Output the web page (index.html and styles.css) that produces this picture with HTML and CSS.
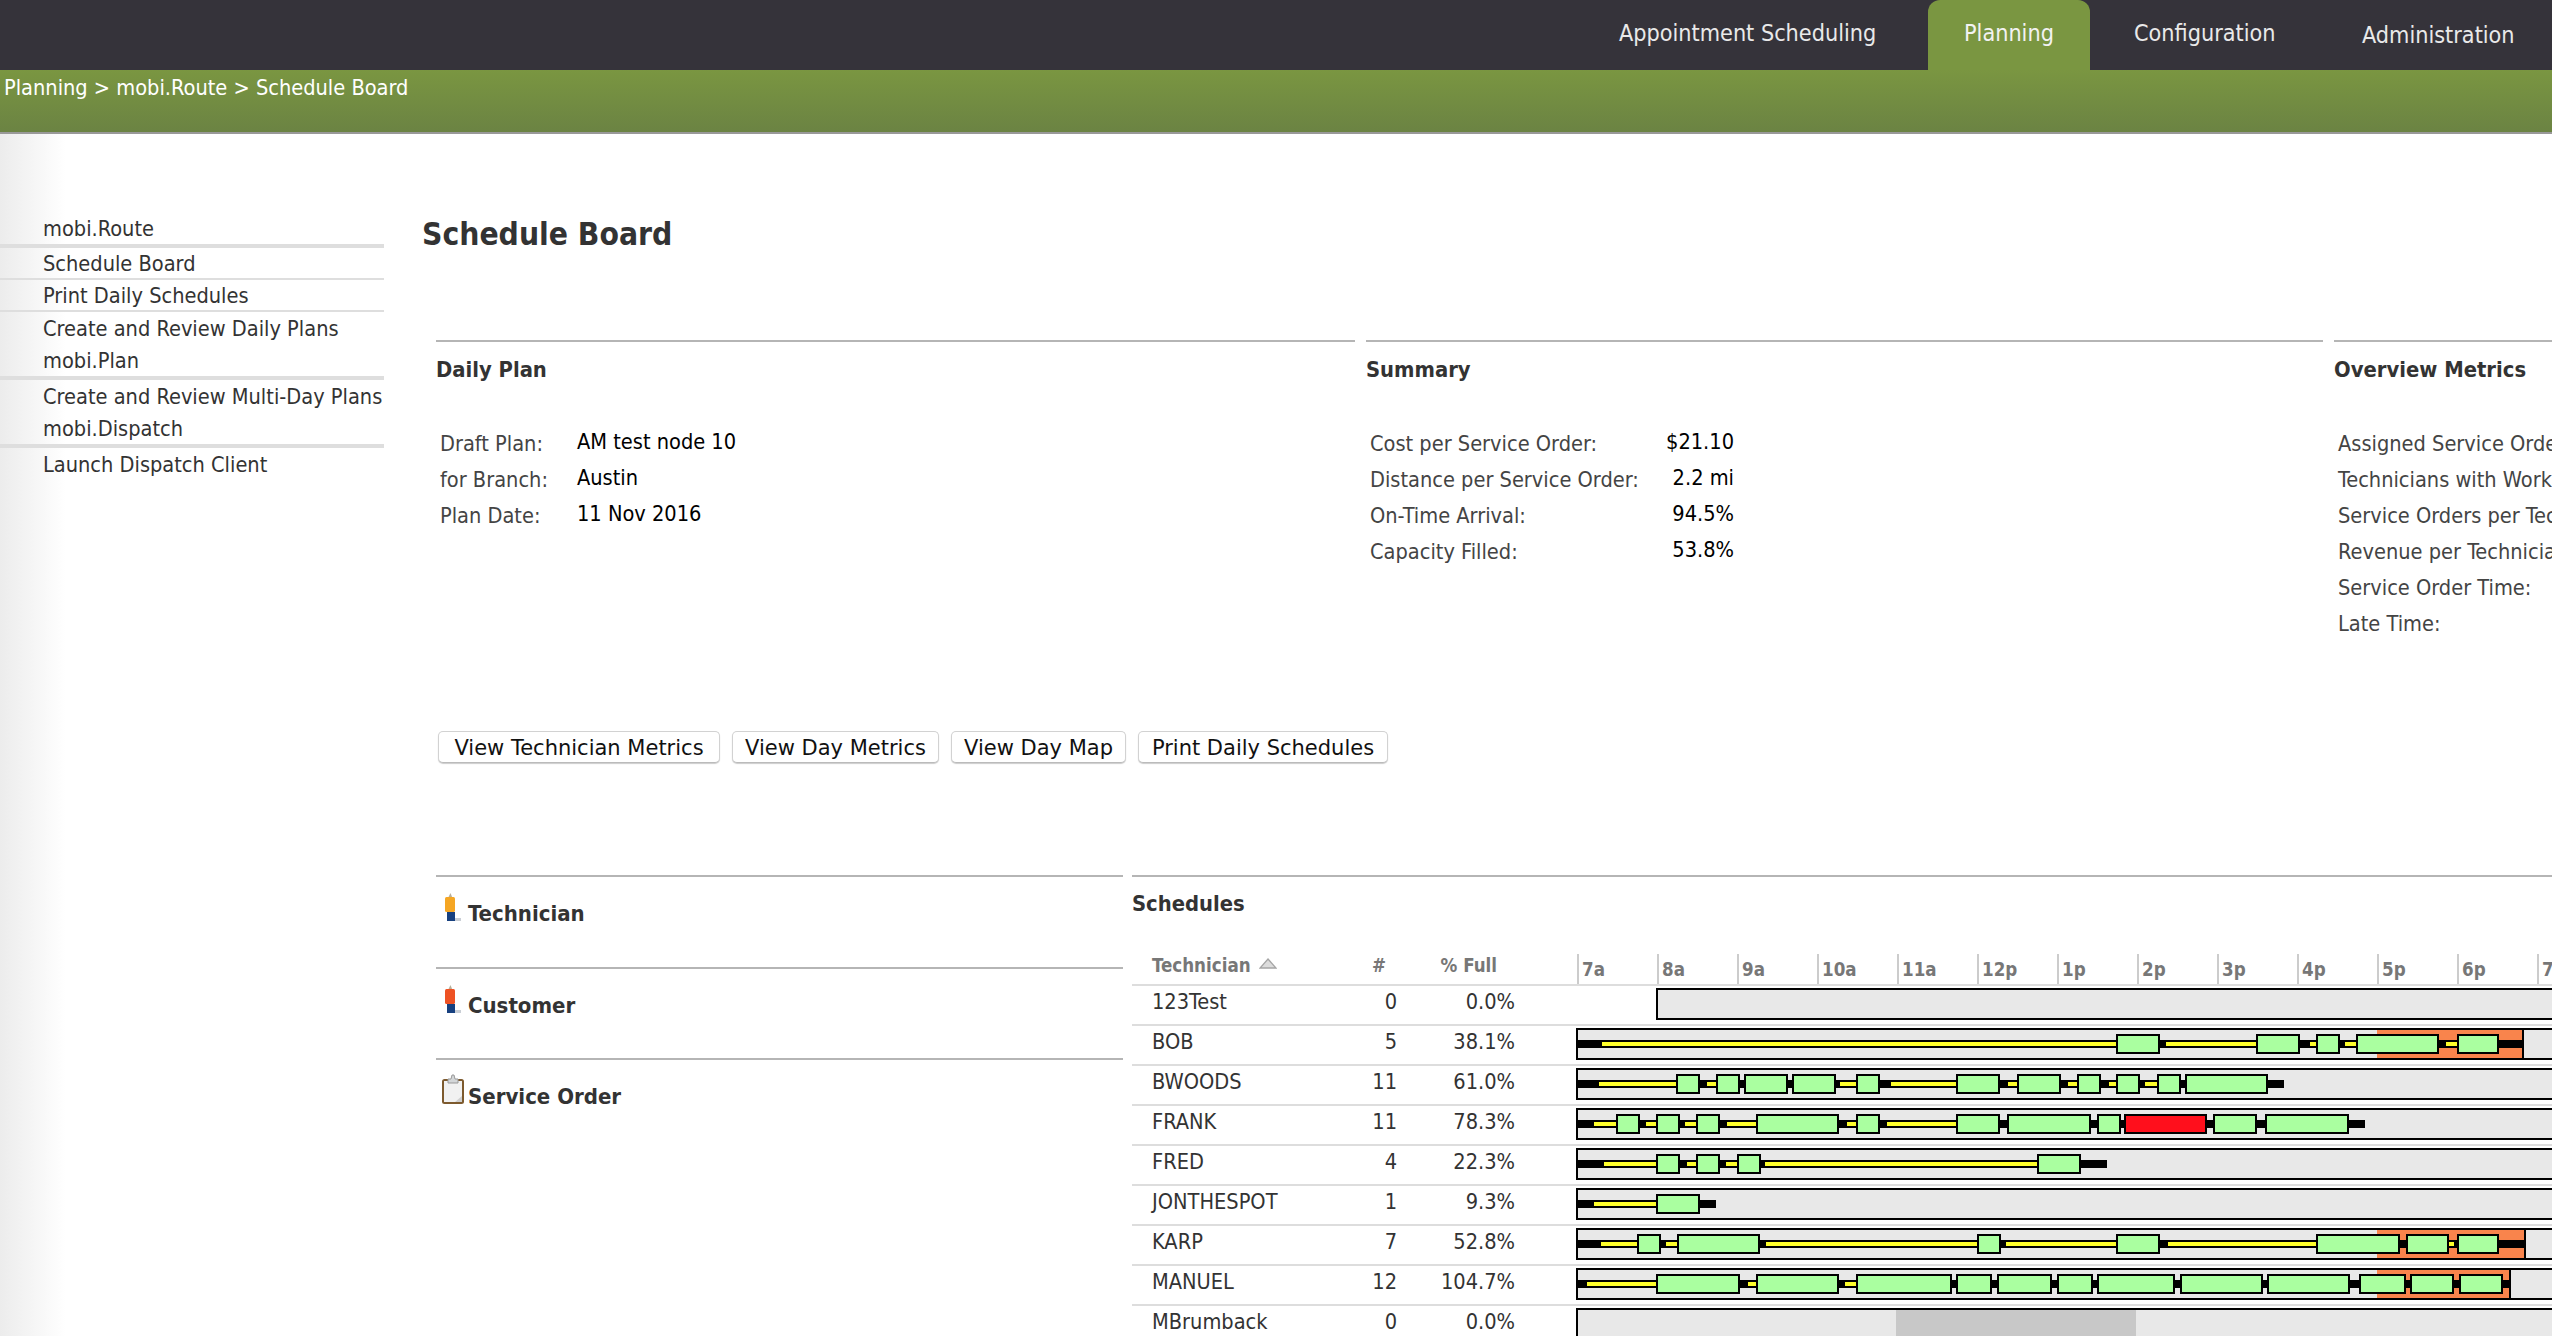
FILE: index.html
```html
<!DOCTYPE html>
<html lang="en">
<head>
<meta charset="utf-8">
<title>Schedule Board</title>
<link rel="stylesheet" href="styles.css">
</head>
<body>
<header class="topbar">
  <nav class="tabs">
    <a class="tab tab-appt">Appointment Scheduling</a>
    <a class="tab tab-active">Planning</a>
    <a class="tab tab-config">Configuration</a>
    <a class="tab tab-admin">Administration</a>
  </nav>
</header>
<div class="crumbs">Planning &gt; mobi.Route &gt; Schedule Board</div>
<div class="layout">
  <aside class="sidebar">
    <div class="side-item rule-thick">mobi.Route</div>
    <div class="side-item rule-thin">Schedule Board</div>
    <div class="side-item rule-thin">Print Daily Schedules</div>
    <div class="side-item">Create and Review Daily Plans</div>
    <div class="side-item rule-thick">mobi.Plan</div>
    <div class="side-item">Create and Review Multi-Day Plans</div>
    <div class="side-item rule-thick">mobi.Dispatch</div>
    <div class="side-item">Launch Dispatch Client</div>
  </aside>
  <main class="main">
    <h1 class="title">Schedule Board</h1>
    <section class="panels">
      <div class="panel">
        <h2 class="heading">Daily Plan</h2>
        <div class="kv kv-plan">
          <span class="k">Draft Plan:</span><span class="v">AM test node 10</span>
          <span class="k">for Branch:</span><span class="v">Austin</span>
          <span class="k">Plan Date:</span><span class="v">11 Nov 2016</span>
        </div>
      </div>
      <div class="panel">
        <h2 class="heading">Summary</h2>
        <div class="kv kv-summary">
          <span class="k">Cost per Service Order:</span><span class="v">$21.10</span>
          <span class="k">Distance per Service Order:</span><span class="v">2.2 mi</span>
          <span class="k">On-Time Arrival:</span><span class="v">94.5%</span>
          <span class="k">Capacity Filled:</span><span class="v">53.8%</span>
        </div>
      </div>
      <div class="panel">
        <h2 class="heading">Overview Metrics</h2>
        <div class="kv kv-overview">
          <span class="k">Assigned Service Orders:</span>
          <span class="k">Technicians with Work:</span>
          <span class="k">Service Orders per Technician:</span>
          <span class="k">Revenue per Technician:</span>
          <span class="k">Service Order Time:</span>
          <span class="k">Late Time:</span>
        </div>
      </div>
    </section>
    <div class="actions">
      <button class="btn btn-tech">View Technician Metrics</button>
      <button class="btn btn-metrics">View Day Metrics</button>
      <button class="btn btn-map">View Day Map</button>
      <button class="btn btn-print">Print Daily Schedules</button>
    </div>
    <section class="lower">
      <div class="legend">
        <div class="legend-row">
          <span class="legend-icon">
            <svg width="18" height="30" viewBox="0 0 18 30"><path d="M3 5 L5.5 0 L7.5 5 Z" fill="#b9b09a"/><rect x="0" y="4" width="10" height="15" rx="1.5" fill="#f5a623"/><rect x="2" y="19" width="8" height="9" fill="#17407f"/><rect x="10" y="25" width="6" height="3" fill="#c9ced5"/></svg>
          </span>
          <span class="legend-label">Technician</span>
        </div>
        <div class="legend-row">
          <span class="legend-icon">
            <svg width="18" height="30" viewBox="0 0 18 30"><path d="M3 5 L5.5 0 L7.5 5 Z" fill="#b9b09a"/><rect x="0" y="4" width="10" height="15" rx="1.5" fill="#ee5224"/><rect x="2" y="19" width="8" height="9" fill="#17407f"/><rect x="10" y="25" width="6" height="3" fill="#c9ced5"/></svg>
          </span>
          <span class="legend-label">Customer</span>
        </div>
        <div class="legend-row">
          <span class="legend-icon icon-clip">
            <svg width="24" height="31" viewBox="0 0 24 31"><rect x="1" y="5" width="22" height="25" rx="2.5" fill="#7d5a2e"/><rect x="3" y="7" width="18" height="21" fill="#f1f1f1"/><path d="M14 28 L21 28 L21 22 Z" fill="#cfcfcf"/><path d="M7 9 L7 5 L10 5 L11 1 L13 1 L14 5 L17 5 L17 9 Z" fill="#d3d6d8" stroke="#999" stroke-width="1"/></svg>
          </span>
          <span class="legend-label">Service Order</span>
        </div>
      </div>
      <div class="schedules">
        <h2 class="heading">Schedules</h2>
        <div class="board-head">
          <span class="hc">Technician <svg class="sort" width="18" height="11" viewBox="0 0 18 11"><path d="M9 1 L17 10 L1 10 Z" fill="#dcdcdc" stroke="#a5a5a5" stroke-width="1.3"/></svg></span>
          <span class="hc hc-count">#</span>
          <span class="hc hc-full">% Full</span>
          <div class="hours">
            <span class="hour">7a</span><span class="hour">8a</span><span class="hour">9a</span><span class="hour">10a</span><span class="hour">11a</span><span class="hour">12p</span><span class="hour">1p</span><span class="hour">2p</span><span class="hour">3p</span><span class="hour">4p</span><span class="hour">5p</span><span class="hour">6p</span><span class="hour">7p</span>
          </div>
        </div>

        <div class="board-row">
          <span class="c-name">123Test</span><span class="c-num">0</span><span class="c-num">0.0%</span>
          <div class="track track-late"></div>
        </div>

        <div class="board-row">
          <span class="c-name">BOB</span><span class="c-num">5</span><span class="c-num">38.1%</span>
          <div class="track">
            <i class="over" style="left:798px;width:147px"></i>
            <i class="line" style="width:945px"></i>
            <i class="drive" style="left:23px;width:514px"></i>
            <i class="job" style="left:537px;width:44px"></i>
            <i class="drive" style="left:587px;width:90px"></i>
            <i class="job" style="left:677px;width:44px"></i>
            <i class="drive" style="left:731px;width:6px"></i>
            <i class="job" style="left:737px;width:24px"></i>
            <i class="drive" style="left:766px;width:11px"></i>
            <i class="job" style="left:777px;width:83px"></i>
            <i class="drive" style="left:867px;width:11px"></i>
            <i class="job" style="left:878px;width:42px"></i>
          </div>
        </div>

        <div class="board-row">
          <span class="c-name">BWOODS</span><span class="c-num">11</span><span class="c-num">61.0%</span>
          <div class="track">
            <i class="line" style="width:706px"></i>
            <i class="drive" style="left:20px;width:78px"></i>
            <i class="job" style="left:97px;width:24px"></i>
            <i class="drive" style="left:128px;width:9px"></i>
            <i class="job" style="left:137px;width:24px"></i>
            <i class="job" style="left:165px;width:44px"></i>
            <i class="job" style="left:213px;width:44px"></i>
            <i class="drive" style="left:261px;width:17px"></i>
            <i class="job" style="left:277px;width:24px"></i>
            <i class="drive" style="left:312px;width:65px"></i>
            <i class="job" style="left:377px;width:44px"></i>
            <i class="drive" style="left:429px;width:9px"></i>
            <i class="job" style="left:438px;width:44px"></i>
            <i class="drive" style="left:489px;width:9px"></i>
            <i class="job" style="left:498px;width:24px"></i>
            <i class="drive" style="left:530px;width:7px"></i>
            <i class="job" style="left:537px;width:24px"></i>
            <i class="drive" style="left:566px;width:12px"></i>
            <i class="job" style="left:578px;width:24px"></i>
            <i class="job" style="left:606px;width:83px"></i>
          </div>
        </div>

        <div class="board-row">
          <span class="c-name">FRANK</span><span class="c-num">11</span><span class="c-num">78.3%</span>
          <div class="track">
            <i class="line" style="width:787px"></i>
            <i class="drive" style="left:15px;width:22px"></i>
            <i class="job" style="left:37px;width:24px"></i>
            <i class="drive" style="left:67px;width:10px"></i>
            <i class="job" style="left:77px;width:24px"></i>
            <i class="drive" style="left:106px;width:11px"></i>
            <i class="job" style="left:117px;width:24px"></i>
            <i class="drive" style="left:148px;width:29px"></i>
            <i class="job" style="left:177px;width:83px"></i>
            <i class="drive" style="left:268px;width:9px"></i>
            <i class="job" style="left:277px;width:24px"></i>
            <i class="drive" style="left:308px;width:69px"></i>
            <i class="job" style="left:377px;width:44px"></i>
            <i class="job" style="left:428px;width:84px"></i>
            <i class="job" style="left:518px;width:24px"></i>
            <i class="job job-late" style="left:545px;width:83px"></i>
            <i class="job" style="left:634px;width:44px"></i>
            <i class="job" style="left:686px;width:84px"></i>
          </div>
        </div>

        <div class="board-row">
          <span class="c-name">FRED</span><span class="c-num">4</span><span class="c-num">22.3%</span>
          <div class="track">
            <i class="line" style="width:529px"></i>
            <i class="drive" style="left:25px;width:52px"></i>
            <i class="job" style="left:77px;width:24px"></i>
            <i class="drive" style="left:108px;width:9px"></i>
            <i class="job" style="left:117px;width:24px"></i>
            <i class="drive" style="left:147px;width:11px"></i>
            <i class="job" style="left:158px;width:24px"></i>
            <i class="drive" style="left:186px;width:272px"></i>
            <i class="job" style="left:458px;width:44px"></i>
          </div>
        </div>

        <div class="board-row">
          <span class="c-name">JONTHESPOT</span><span class="c-num">1</span><span class="c-num">9.3%</span>
          <div class="track">
            <i class="line" style="width:138px"></i>
            <i class="drive" style="left:15px;width:62px"></i>
            <i class="job" style="left:77px;width:44px"></i>
          </div>
        </div>

        <div class="board-row">
          <span class="c-name">KARP</span><span class="c-num">7</span><span class="c-num">52.8%</span>
          <div class="track">
            <i class="over" style="left:798px;width:149px"></i>
            <i class="line" style="width:947px"></i>
            <i class="drive" style="left:22px;width:36px"></i>
            <i class="job" style="left:58px;width:24px"></i>
            <i class="drive" style="left:87px;width:11px"></i>
            <i class="job" style="left:98px;width:83px"></i>
            <i class="drive" style="left:187px;width:211px"></i>
            <i class="job" style="left:398px;width:24px"></i>
            <i class="drive" style="left:427px;width:110px"></i>
            <i class="job" style="left:537px;width:44px"></i>
            <i class="drive" style="left:589px;width:148px"></i>
            <i class="job" style="left:737px;width:84px"></i>
            <i class="job" style="left:827px;width:43px"></i>
            <i class="drive" style="left:870px;width:5px"></i>
            <i class="job" style="left:878px;width:42px"></i>
          </div>
        </div>

        <div class="board-row">
          <span class="c-name">MANUEL</span><span class="c-num">12</span><span class="c-num">104.7%</span>
          <div class="track">
            <i class="over" style="left:798px;width:134px"></i>
            <i class="line" style="width:932px"></i>
            <i class="drive" style="left:8px;width:69px"></i>
            <i class="job" style="left:77px;width:84px"></i>
            <i class="drive" style="left:169px;width:8px"></i>
            <i class="job" style="left:177px;width:83px"></i>
            <i class="drive" style="left:266px;width:11px"></i>
            <i class="job" style="left:277px;width:96px"></i>
            <i class="job" style="left:377px;width:36px"></i>
            <i class="job" style="left:418px;width:55px"></i>
            <i class="job" style="left:478px;width:36px"></i>
            <i class="job" style="left:518px;width:78px"></i>
            <i class="job" style="left:601px;width:83px"></i>
            <i class="job" style="left:688px;width:83px"></i>
            <i class="job" style="left:780px;width:47px"></i>
            <i class="job" style="left:831px;width:44px"></i>
            <i class="job" style="left:880px;width:44px"></i>
          </div>
        </div>

        <div class="board-row">
          <span class="c-name">MBrumback</span><span class="c-num">0</span><span class="c-num">0.0%</span>
          <div class="track">
            <i class="off" style="left:317px;width:240px"></i>
          </div>
        </div>
      </div>
    </section>
  </main>
</div>
</body>
</html>
```

FILE: styles.css
```css
* { box-sizing: border-box; }
html, body { margin: 0; height: 1336px; overflow: hidden; background: #fff; }
body {
  width: 2552px;
  font-family: "DejaVu Sans Condensed", "DejaVu Sans", sans-serif;
  font-stretch: condensed;
  font-size: 21.6px;
  color: #333;
}
.topbar { height: 70px; background: #35333a; }
.tabs { display: flex; height: 70px; padding-left: 1619px; }
.tab { color: #e9e9e9; line-height: 66px; font-size: 23.2px; white-space: nowrap; }
.tab-appt { width: 309px; }
.tab-active { width: 162px; padding-left: 36px; background: #7a9641; border-radius: 12px 12px 0 0; color: #f2f2f2; }
.tab-config { margin-left: 44px; width: 228px; }
.tab-admin { line-height: 70px; }
.crumbs {
  height: 64px;
  padding-left: 4px;
  line-height: 36px;
  color: #fff;
  background: linear-gradient(#7a9641, #6b8343);
  border-bottom: 2px solid #999;
}
.layout { display: flex; height: 1202px; }
.sidebar {
  flex: 0 0 384px;
  padding-top: 78px;
  background: linear-gradient(90deg, #ececec, #fff 66px);
}
.side-item { height: 32px; padding-left: 43px; line-height: 33px; white-space: nowrap; color: #333; }
.rule-thick { height: 36px; border-bottom: 4px solid #dedede; }
.rule-thin { height: 32px; border-bottom: 2px solid #dedede; line-height: 31px; }
.main { flex: 0 0 auto; width: 2168px; padding-left: 52px; }
.title {
  margin: 80px 0 86px -14px;
  height: 40px;
  line-height: 40px;
  font-size: 31.5px;
  font-weight: 700;
  color: #333;
}
.panels { display: grid; grid-template-columns: 919px 957px 300px; column-gap: 11px; height: 391px; }
.panel { border-top: 2px solid #b5b5b5; }
.heading { margin: 13px 0 0; height: 30px; line-height: 30px; font-size: 21.8px; font-weight: 700; color: #333; }
.kv { display: grid; grid-auto-rows: 36px; margin-top: 41px; padding-left: 4px; line-height: 36px; white-space: nowrap; }
.kv-plan { grid-template-columns: 137px auto; justify-content: start; }
.kv-summary { grid-template-columns: 280px 84px; justify-content: start; }
.kv-summary .v { text-align: right; }
.k { color: #444; }
.v { color: #000; line-height: 32px; }
.actions { display: flex; gap: 12px; margin: 0 0 112px 2px; }
.btn {
  height: 32px;
  padding: 2px 0 0;
  border: 1px solid #d2d2d2;
  border-bottom-color: #bbb;
  border-radius: 5px;
  background: #fff;
  box-shadow: 0 1px 1px #ccc;
  font-family: "DejaVu Sans", sans-serif;
  font-stretch: normal;
  font-size: 21px;
  color: #111;
  text-align: center;
  white-space: nowrap;
}
.btn-tech { width: 282px; }
.btn-metrics { width: 207px; }
.btn-map { width: 175px; }
.btn-print { width: 250px; }
.lower { display: grid; grid-template-columns: 687px 1420px; column-gap: 9px; }
.legend-row {
  display: flex;
  height: 91.6px;
  padding-top: 16px;
  border-top: 2px solid #b5b5b5;
}
.legend-icon { flex: 0 0 32px; height: 30px; padding-left: 9px; line-height: 0; }
.icon-clip { padding-left: 5px; margin-top: -2px; }
.legend-label { margin-top: 6px; line-height: 30px; font-size: 22px; font-weight: 700; color: #333; }
.schedules { border-top: 2px solid #b5b5b5; }
.schedules .heading { margin: 12px 0 35px; }
.board-head, .board-row {
  display: grid;
  grid-template-columns: 188px 57px 118px 1fr;
  padding-left: 20px;
}
.board-head { height: 31px; }
.hc { font-size: 18.6px; font-weight: 700; color: #777; line-height: 24px; white-space: nowrap; }
.hc-count { padding-right: 11px; text-align: right; }
.hc-full { padding-right: 18px; text-align: right; }
.sort { margin-left: 3px; vertical-align: 3px; }
.hours { display: flex; margin-left: 62px; }
.hour {
  flex: 0 0 80px;
  padding: 4px 0 0 3px;
  border-left: 2px solid #ccc;
  font-size: 18.6px;
  font-weight: 700;
  color: #777;
  line-height: 24px;
}
.board-row { position: relative; height: 40px; }
.board-row::before {
  content: "";
  position: absolute;
  left: 0;
  right: 0;
  top: -1px;
  height: 2px;
  background: #ddd;
}
.c-name, .c-num { padding-top: 2px; line-height: 30px; color: #333; white-space: nowrap; }
.c-num { text-align: right; }
.track {
  position: relative;
  height: 32px;
  margin: 3px 0 0 61px;
  background: #e8e8e8;
  border: 2px solid #000;
  border-right: 0;
}
.track-late { margin-left: 141px; }
.track i { position: absolute; display: block; margin-left: 1px; }
.line { left: -1px; top: 10px; height: 8px; background: #000; }
.drive { top: 12px; height: 4px; background: #ffff2a; }
.job { top: 4px; height: 20px; background: #aaffa0; border: 2px solid #000; }
.job-late { background: #ff0f1c; }
.over { top: 0; bottom: 0; background: #f9844c; border-right: 2px solid #000; }
.off { top: 0; bottom: 0; background: #c8c8c8; }
```
